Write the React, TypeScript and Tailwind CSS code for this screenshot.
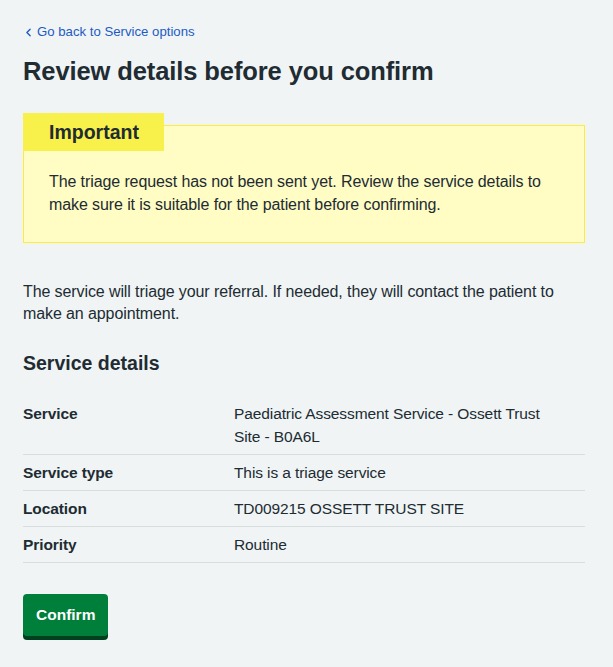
import { ChevronLeft } from "lucide-react";

const DETAILS = [
  { key: "Service", value: "Paediatric Assessment Service - Ossett Trust Site - B0A6L" },
  { key: "Service type", value: "This is a triage service" },
  { key: "Location", value: "TD009215 OSSETT TRUST SITE" },
  { key: "Priority", value: "Routine" },
];

export default function App() {
  return (
    <div className="min-h-[667px] bg-[#f0f4f5] pl-[23px] pr-[28px] pt-[22px] pb-10 font-['Liberation_Sans',Arial,sans-serif] text-[#212b32]">
      {/* Back link */}
      <a href="#" className="flex items-center gap-[2px] text-[13.2px] leading-5 text-[#1d5bc4]">
        <ChevronLeft size={13} strokeWidth={2.5} className="-ml-[1px]" />
        Go back to Service options
      </a>

      <h1 className="mt-[13px] text-[25.5px] font-bold leading-[32px] tracking-[-0.1px]">
        Review details before you confirm
      </h1>

      {/* Warning callout */}
      <div className="relative mt-[38px] border border-[#ffeb3b] bg-[#fffcc4] px-[25px] pt-[44px] pb-[26px]">
        <h3 className="absolute -top-[13px] -left-[1px] bg-[#f9f14b] pl-[26px] pr-[25px] py-[7px] text-[19.5px] font-bold leading-6">
          Important
        </h3>
        <p className="text-[16px] leading-[23px] tracking-[-0.1px]">
          The triage request has not been sent yet. Review the service details to make sure it is suitable for the patient before confirming.
        </p>
      </div>

      <p className="mt-[38px] text-[16px] leading-[22px] tracking-[-0.1px]">
        The service will triage your referral. If needed, they will contact the patient to make an appointment.
      </p>

      <h2 className="mt-[24px] text-[19.5px] font-bold leading-7">Service details</h2>

      {/* Summary list */}
      <dl className="mt-[19px]">
        {DETAILS.map((d) => (
          <div key={d.key} className="flex border-b border-[#d8dde0] py-[6px] text-[15.5px] leading-[23px] tracking-[-0.1px]">
            <dt className="w-[211px] shrink-0 font-bold">{d.key}</dt>
            <dd className="w-[320px]">{d.value}</dd>
          </div>
        ))}
      </dl>

      <button className="mt-[31px] rounded-[4px] bg-[#007f3b] px-[13px] py-[9px] text-[15.5px] font-bold leading-6 text-white shadow-[0_4px_0_#00401e]">
        Confirm
      </button>
    </div>
  );
}
